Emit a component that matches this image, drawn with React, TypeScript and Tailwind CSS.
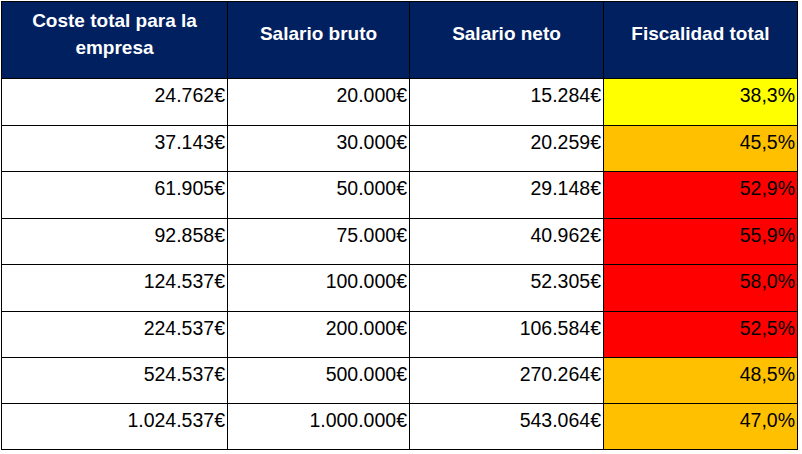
import React from "react";

type Row = {
  coste: string;
  bruto: string;
  neto: string;
  fiscal: string;
  tone: "yellow" | "orange" | "red";
};

const rows: Row[] = [
  { coste: "24.762€", bruto: "20.000€", neto: "15.284€", fiscal: "38,3%", tone: "yellow" },
  { coste: "37.143€", bruto: "30.000€", neto: "20.259€", fiscal: "45,5%", tone: "orange" },
  { coste: "61.905€", bruto: "50.000€", neto: "29.148€", fiscal: "52,9%", tone: "red" },
  { coste: "92.858€", bruto: "75.000€", neto: "40.962€", fiscal: "55,9%", tone: "red" },
  { coste: "124.537€", bruto: "100.000€", neto: "52.305€", fiscal: "58,0%", tone: "red" },
  { coste: "224.537€", bruto: "200.000€", neto: "106.584€", fiscal: "52,5%", tone: "red" },
  { coste: "524.537€", bruto: "500.000€", neto: "270.264€", fiscal: "48,5%", tone: "orange" },
  { coste: "1.024.537€", bruto: "1.000.000€", neto: "543.064€", fiscal: "47,0%", tone: "orange" },
];

const toneBg: Record<Row["tone"], string> = {
  yellow: "bg-[#ffff00]",
  orange: "bg-[#ffc000]",
  red: "bg-[#ff0000]",
};

const headers = ["Coste total para la empresa", "Salario bruto", "Salario neto", "Fiscalidad total"];

const Cell: React.FC<{ children: React.ReactNode; bg?: string }> = ({ children, bg = "bg-white" }) => (
  <div
    className={`${bg} border-r border-b border-black text-right pr-[2px] pt-[5px] text-[19.5px] leading-[22px] text-black`}
  >
    {children}
  </div>
);

export default function App() {
  return (
    <div
      className="w-[802px] h-[454px] bg-white pl-[1px] pt-[1px]"
      style={{ fontFamily: '"Liberation Sans", Arial, sans-serif' }}
    >
      <div className="grid w-[797px] grid-cols-[226px_182px_194px_194px] grid-rows-[77px_47px_46px_47px_46px_47px_46px_46px_46px] border-l border-t border-black">
        {headers.map((h) => (
          <div
            key={h}
            className="bg-[#002060] border-r border-b border-black flex items-center justify-center text-center pb-[13px] px-[4px] text-[19px] leading-[27px] font-bold text-white"
          >
            {h}
          </div>
        ))}
        {rows.map((r) => (
          <React.Fragment key={r.coste}>
            <Cell>{r.coste}</Cell>
            <Cell>{r.bruto}</Cell>
            <Cell>{r.neto}</Cell>
            <Cell bg={toneBg[r.tone]}>{r.fiscal}</Cell>
          </React.Fragment>
        ))}
      </div>
    </div>
  );
}
